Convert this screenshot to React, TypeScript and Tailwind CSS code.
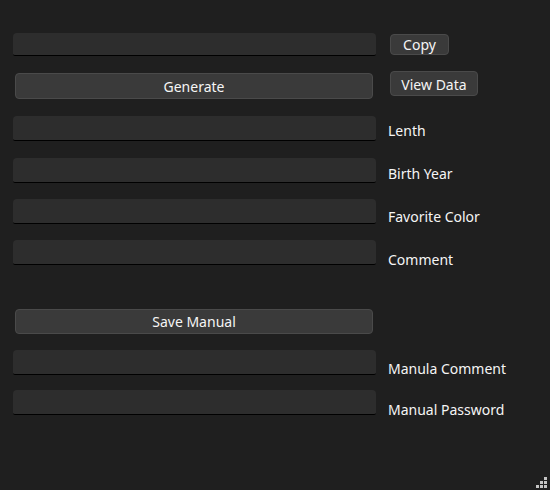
import React from "react";

const font = { fontFamily: '"Noto Sans", "Open Sans", sans-serif' };

function TextBox({ className = "" }: { className?: string }) {
  return (
    <div
      className={`w-[363px] shrink-0 rounded-t-[4px] rounded-b-[2px] bg-[#2d2d2d] border-b border-b-black ${className}`}
    />
  );
}

function Button({ label, className = "" }: { label: string; className?: string }) {
  return (
    <button
      className={`flex shrink-0 items-center justify-center rounded-[4px] border border-[#4a4a4a] bg-[#3a3a3a] text-[14px] leading-none text-[#f5f5f5] ${className}`}
    >
      {label}
    </button>
  );
}

function FieldRow({ label, top, labelTop }: { label: string; top: string; labelTop: string }) {
  return (
    <div className={`flex h-[25px] items-start ${top}`}>
      <TextBox className="h-[25px]" />
      <span className={`ml-[12px] whitespace-nowrap text-[14px] leading-[20px] text-[#f5f5f5] ${labelTop}`}>
        {label}
      </span>
    </div>
  );
}

export default function App() {
  return (
    <div className="relative h-[490px] w-[550px] overflow-hidden bg-[#1f1f1f] pl-[13px]" style={font}>
      <div className="flex flex-col pt-[33px]">
        <div className="flex h-[22px] items-start">
          <TextBox className="h-[23px]" />
          <Button label="Copy" className="ml-[14px] mt-[1px] h-[21px] w-[59px] pt-[1px]" />
        </div>

        <div className="mt-[16px] flex h-[28px] items-start">
          <Button label="Generate" className="ml-[2px] mt-[2px] h-[26px] w-[358px] pt-[1px]" />
          <Button label="View Data" className="ml-[17px] h-[25px] w-[88px] pt-[2px]" />
        </div>

        <FieldRow label="Lenth" top="mt-[17px]" labelTop="mt-[5px]" />
        <FieldRow label="Birth Year" top="mt-[17px]" labelTop="mt-[6px]" />
        <FieldRow label="Favorite Color" top="mt-[16px]" labelTop="mt-[8px]" />
        <FieldRow label="Comment" top="mt-[16px]" labelTop="mt-[10px]" />

        <div className="mt-[44px] flex h-[24px]">
          <Button label="Save Manual" className="ml-[2px] h-[25px] w-[358px] pt-[1px]" />
        </div>

        <FieldRow label="Manula Comment" top="mt-[17px]" labelTop="mt-[9px]" />
        <FieldRow label="Manual Password" top="mt-[15px]" labelTop="mt-[10px]" />
      </div>

      <svg className="absolute bottom-0 right-0" width="16" height="16" viewBox="0 0 16 16">
        <g fill="#c4c4c4">
          <rect x="10" y="3" width="3" height="3" />
          <rect x="6" y="7" width="3" height="3" />
          <rect x="10" y="7" width="3" height="3" />
          <rect x="2" y="11" width="3" height="3" />
          <rect x="6" y="11" width="3" height="3" />
          <rect x="10" y="11" width="3" height="3" />
        </g>
      </svg>
    </div>
  );
}
